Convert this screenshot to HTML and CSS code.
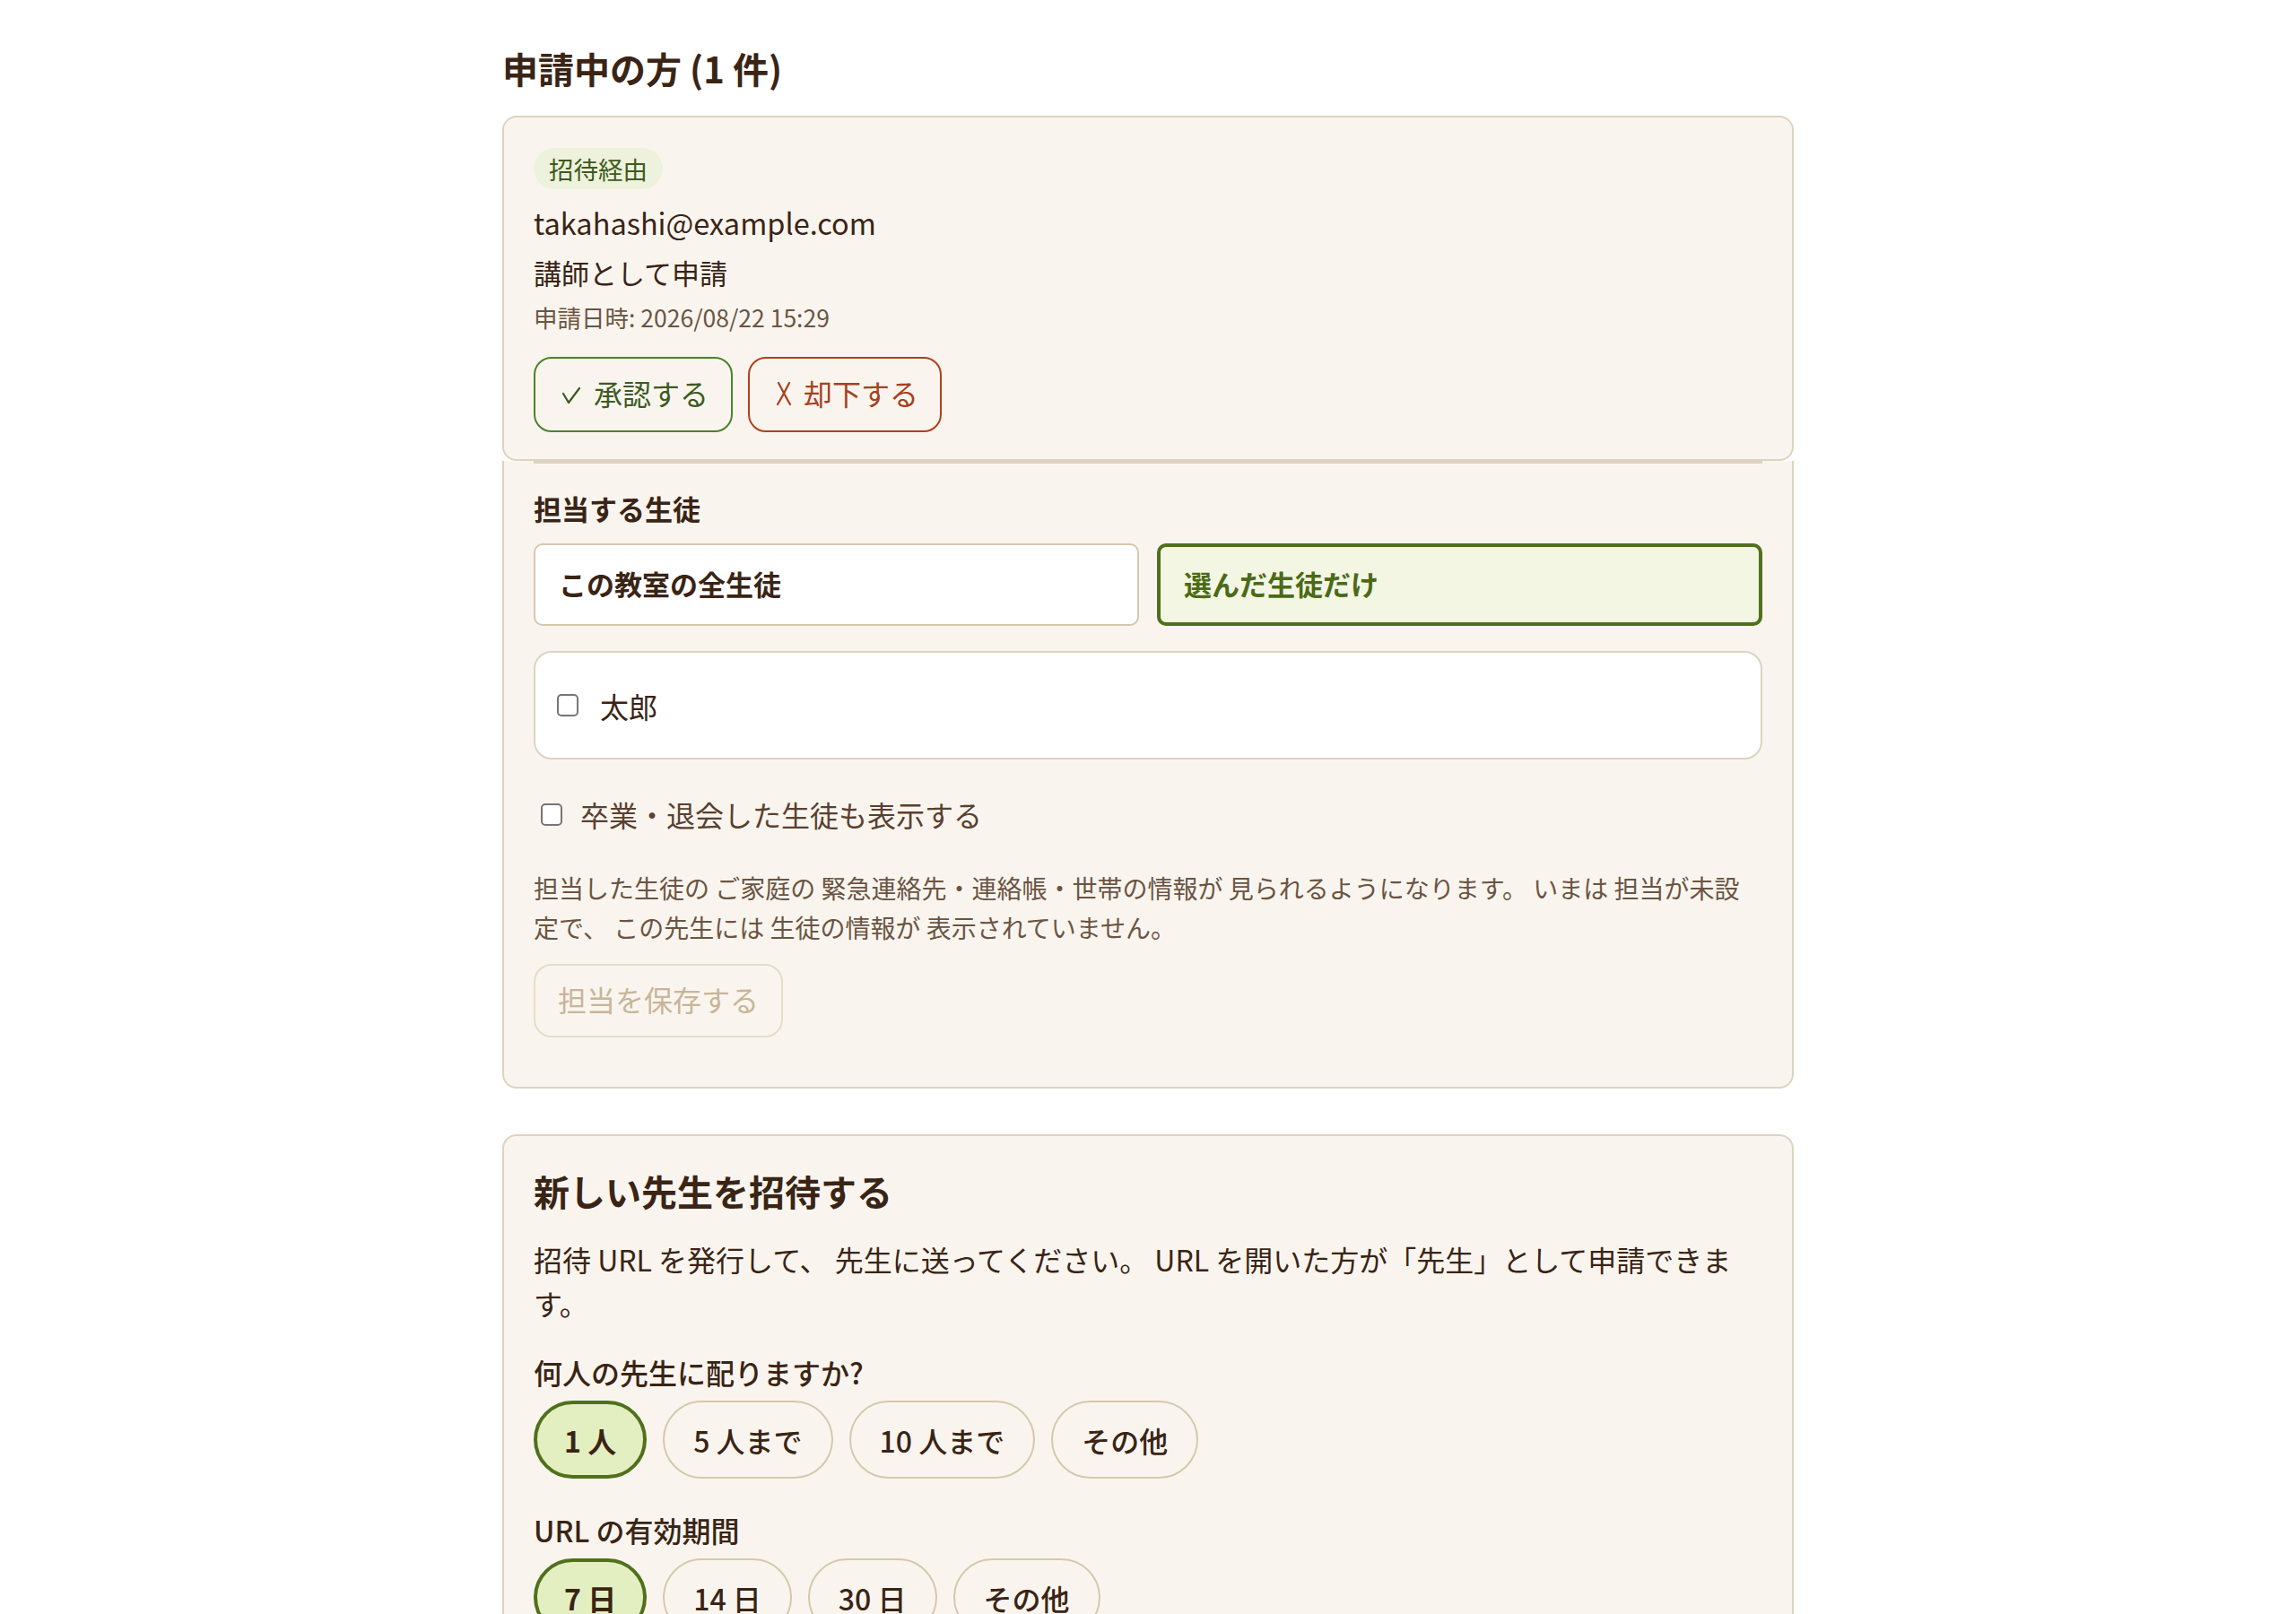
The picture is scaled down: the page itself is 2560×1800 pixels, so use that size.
FILE: index.html
```html
<!DOCTYPE html>
<html lang="ja">
<head>
  <meta charset="UTF-8" />
  <title>先生の管理</title>
  <link rel="stylesheet" href="styles.css">
</head>
<body>
  <main class="page">
    <h2 class="section-title">申請中の方 (1 件)</h2>

    <div class="request-card">
      <span class="badge">招待経由</span>
      <div class="email">takahashi@example.com</div>
      <div class="role">講師として申請</div>
      <div class="date">申請日時: 2026/08/22 15:29</div>
      <div class="actions">
        <button class="btn btn-approve">
          <svg class="icon-check" viewBox="0 0 22 22" width="22" height="22"><path d="M2 9 L8 19 L20 3" fill="none" stroke="currentColor" stroke-width="2.2" stroke-linecap="round" stroke-linejoin="round"/></svg>
          承認する
        </button>
        <button class="btn btn-reject">
          <svg class="icon-x" viewBox="0 0 20 28" width="20" height="28"><path d="M4 2 C8 9 12 18 17 26 M16 2 C12 10 8 18 3 26" fill="none" stroke="currentColor" stroke-width="2.2" stroke-linecap="round"/></svg>
          却下する
        </button>
      </div>
    </div>

    <div class="assign-panel">
      <div class="assign">
        <div class="field-label">担当する生徒</div>
        <div class="scope">
          <button class="scope-option">この教室の全生徒</button>
          <button class="scope-option selected">選んだ生徒だけ</button>
        </div>
        <div class="student-list">
          <label class="check-row"><input type="checkbox" class="check">太郎</label>
        </div>
        <label class="check-row show-left"><input type="checkbox" class="check">卒業・退会した生徒も表示する</label>
        <p class="help">担当した生徒の ご家庭の 緊急連絡先・連絡帳・世帯の情報が 見られるようになります。 いまは 担当が未設定で、 この先生には 生徒の情報が 表示されていません。</p>
        <button class="btn btn-save" disabled>担当を保存する</button>
      </div>
    </div>

    <section class="invite-card">
      <h3 class="invite-title">新しい先生を招待する</h3>
      <p class="invite-text">招待 URL を発行して、 先生に送ってください。 URL を開いた方が「先生」として申請できます。</p>

      <div class="question">何人の先生に配りますか?</div>
      <div class="pills">
        <button class="pill active">1 人</button>
        <button class="pill">5 人まで</button>
        <button class="pill">10 人まで</button>
        <button class="pill">その他</button>
      </div>

      <div class="question">URL の有効期間</div>
      <div class="pills">
        <button class="pill active">7 日</button>
        <button class="pill">14 日</button>
        <button class="pill">30 日</button>
        <button class="pill">その他</button>
      </div>
    </section>
  </main>
</body>
</html>
```

FILE: styles.css
```css
body {
  margin: 0;
  background: #fff;
  color: #3a2415;
  font-family: "Noto Sans CJK JP", "Noto Sans", sans-serif;
}
.page {
  width: 1440px;
  margin: 0 auto;
  padding-top: 48px;
}
.section-title {
  font-size: 40px;
  line-height: 56px;
  font-weight: 700;
  margin: 0 0 25px;
}

/* 申請カード */
.request-card {
  background: #f9f5ee;
  border: 2px solid #ddd3c0;
  border-radius: 16px;
  padding: 34px 33px 30px;
}
.badge {
  display: inline-block;
  background: #eef2dc;
  color: #3e5a20;
  font-size: 27.5px;
  line-height: 34px;
  padding: 6px 17px;
  border-radius: 30px;
}
.email {
  font-size: 32.5px;
  line-height: 48px;
  margin-top: 13px;
}
.role {
  font-size: 31px;
  line-height: 46px;
  margin-top: 9px;
}
.date {
  font-size: 26.5px;
  line-height: 40px;
  margin-top: 7px;
  color: #6b5443;
}
.actions {
  display: flex;
  gap: 17px;
  margin-top: 24px;
}
.btn {
  display: inline-flex;
  align-items: center;
  box-sizing: border-box;
  height: 84px;
  padding: 0 28px 5px;
  font-family: inherit;
  font-size: 32px;
  background: transparent;
  border: 2.5px solid #ddd3c0;
  border-radius: 20px;
  cursor: pointer;
}
.btn-approve {
  border-color: #4d8030;
  color: #3d5a22;
  padding: 0 25px 5px 29px;
  gap: 14px;
}
.btn-reject {
  border-color: #b0401c;
  color: #a8401f;
  padding: 0 24px 5px 28px;
  gap: 12px;
}
.icon-check {
  margin-top: 6px;
}
.icon-x {
  margin-top: 2px;
}

/* 担当 */
.assign-panel {
  background: #f9f5ee;
  border: 2px solid #ddd3c0;
  border-top: none;
  border-radius: 0 0 16px 16px;
  padding: 0 33px 55px;
}
.assign {
  border-top: 3px solid #ddd3c0;
  padding-top: 27px;
}
.field-label {
  font-size: 31px;
  line-height: 46px;
  font-weight: 700;
}
.scope {
  display: grid;
  grid-template-columns: 1fr 1fr;
  gap: 20px;
  margin-top: 16px;
}
.scope-option {
  height: 92px;
  text-align: left;
  padding: 0 26px 3px;
  font-family: inherit;
  font-size: 31px;
  font-weight: 700;
  color: #3a2415;
  background: #fff;
  border: 2.5px solid #d6c8ad;
  border-radius: 10px;
}
.scope-option.selected {
  background: #f3f6e2;
  border: 4px solid #50701c;
  color: #4b6a17;
}
.student-list {
  margin-top: 28px;
  height: 121px;
  box-sizing: border-box;
  background: #fff;
  border: 2px solid #ddd3c0;
  border-radius: 20px;
  padding: 0 24px;
  display: flex;
  align-items: center;
}
.check-row {
  display: flex;
  align-items: center;
  gap: 24px;
  font-size: 32px;
  line-height: 48px;
}
.check {
  appearance: none;
  width: 24px;
  height: 25px;
  margin: 0;
  border: 2px solid #767676;
  border-radius: 5px;
  background: #fff;
}
.show-left {
  margin-top: 37px;
  padding-left: 8px;
  gap: 20px;
  color: #5a4030;
}
.help {
  font-size: 28px;
  line-height: 44px;
  color: #6b5443;
  margin: 36px 0 0;
}
.btn-save {
  margin-top: 19px;
  height: 82px;
  padding: 0 25px 5px;
  border: 2px solid #e6dcc8;
  color: #c8b59a;
  cursor: default;
}

/* 招待 */
.invite-card {
  margin-top: 51px;
  background: #f9f5ee;
  border: 2px solid #ddd3c0;
  border-radius: 16px;
  padding: 33px 33px 60px;
}
.invite-title {
  font-size: 40px;
  line-height: 56px;
  font-weight: 700;
  margin: 0;
}
.invite-text {
  font-size: 32px;
  line-height: 49px;
  margin: 24px 0 0;
}
.question {
  font-size: 32px;
  line-height: 48px;
  font-weight: 500;
  margin-top: 28px;
}
.pills + .question {
  margin-top: 33px;
}
.pills {
  display: flex;
  gap: 18px;
  margin-top: 8px;
}
.pill {
  height: 87px;
  padding: 0 32px;
  font-family: inherit;
  font-size: 32px;
  font-weight: 500;
  color: #3a2415;
  background: transparent;
  border: 2.5px solid #d6c8ad;
  border-radius: 44px;
}
.pill.active {
  background: #e3efc0;
  border: 4px solid #50701c;
  font-weight: 700;
  padding: 0 30px;
}
```
